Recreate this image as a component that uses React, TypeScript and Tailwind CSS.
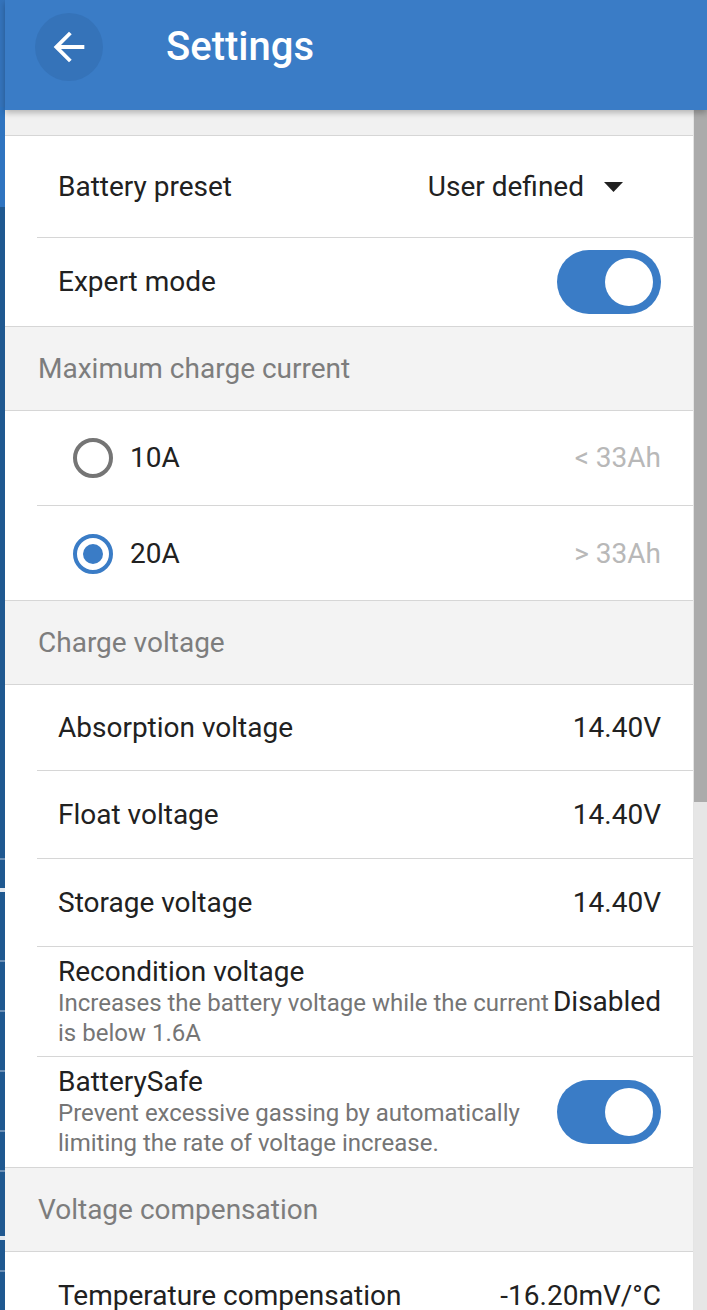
import { ReactNode } from "react";

const Toggle = () => (
  <div className="flex h-[64px] w-[104px] shrink-0 items-center justify-end rounded-full bg-[#3a7cc6] p-[8px]">
    <div className="h-[48px] w-[48px] rounded-full bg-white" />
  </div>
);

const Radio = ({ checked }: { checked: boolean }) => (
  <div
    className={`flex h-[40px] w-[40px] shrink-0 items-center justify-center rounded-full border-[4px] ${
      checked ? "border-[#3a7cc6]" : "border-[#757575]"
    }`}
  >
    {checked && <div className="h-[20px] w-[20px] rounded-full bg-[#3a7cc6]" />}
  </div>
);

const Section = ({ title }: { title: string }) => (
  <div className="flex h-[85px] items-center border-y border-[#d6d6d6] bg-[#f3f3f3] pl-[33px] text-[28px] text-[#7d7d7d]">
    {title}
  </div>
);

const Row = ({
  label,
  right,
  height = "h-[88px]",
  last = false,
}: {
  label: string;
  right?: ReactNode;
  height?: string;
  last?: boolean;
}) => (
  <div className="pl-[32px]">
    <div
      className={`flex ${height} items-center justify-between pl-[21px] pr-[32px] ${
        last ? "" : "border-b border-[#d6d6d6]"
      }`}
    >
      <span className="text-[28px] text-[#212121]">{label}</span>
      {right}
    </div>
  </div>
);

const Value = ({ children }: { children: ReactNode }) => (
  <span className="text-[28px] text-[#212121]">{children}</span>
);

const DescRow = ({
  label,
  desc,
  right,
  last = false,
}: {
  label: string;
  desc: string;
  right: ReactNode;
  last?: boolean;
}) => (
  <div className="pl-[32px]">
    <div
      className={`flex h-[110px] items-center pl-[21px] pr-[32px] ${
        last ? "" : "border-b border-[#d6d6d6]"
      }`}
    >
      <div className="flex w-[494px] shrink-0 flex-col">
        <span className="text-[28px] leading-[32px] text-[#212121]">{label}</span>
        <span className="text-[24px] leading-[30px] text-[#757575]">{desc}</span>
      </div>
      <div className="ml-auto">{right}</div>
    </div>
  </div>
);

const RadioRow = ({
  label,
  hint,
  checked,
  last = false,
}: {
  label: string;
  hint: string;
  checked: boolean;
  last?: boolean;
}) => (
  <div className="pl-[32px]">
    <div
      className={`flex h-[95px] items-center pl-[36px] pr-[32px] ${
        last ? "" : "border-b border-[#d6d6d6]"
      }`}
    >
      <Radio checked={checked} />
      <span className="ml-[17px] flex-1 text-[28px] text-[#212121]">{label}</span>
      <span className="text-[28px] text-[#b8b8b8]">{hint}</span>
    </div>
  </div>
);

const voltages = [
  { label: "Absorption voltage", value: "14.40V", height: "h-[86px]" },
  { label: "Float voltage", value: "14.40V", height: "h-[88px]" },
  { label: "Storage voltage", value: "14.40V", height: "h-[88px]" },
];

export default function App() {
  return (
    <div className="flex h-[1310px] w-[707px] overflow-hidden bg-white font-['Roboto',sans-serif]">
      {/* app peeking behind the panel */}
      <div className="flex w-[5px] shrink-0 flex-col">
        <div className="h-[107px] bg-[#3473bb]" />
        <div className="h-[100px] bg-[#2f74c0]" />
        <div className="flex flex-1 flex-col bg-[#1f5890]">
          <div className="mt-[651px] h-[2px] bg-[#6b8fb5]" />
          <div className="mt-[28px] h-[4px] bg-[#e2e8ef]" />
          <div className="mt-[68px] h-[2px] bg-[#6b8fb5]" />
          <div className="mt-[48px] h-[2px] bg-[#6b8fb5]" />
          <div className="mt-[58px] h-[2px] bg-[#6b8fb5]" />
          <div className="mt-[58px] h-[2px] bg-[#6b8fb5]" />
          <div className="mt-[38px] h-[2px] bg-[#6b8fb5]" />
          <div className="mt-[64px] h-[4px] bg-[#e2e8ef]" />
          <div className="mt-[30px] h-[2px] bg-[#6b8fb5]" />
        </div>
      </div>

      <div className="flex min-w-0 flex-1 flex-col">
        <header className="relative z-10 flex h-[110px] shrink-0 items-start bg-[#3a7cc6] pt-[13px] shadow-[0_3px_6px_rgba(0,0,0,0.25)]">
          <div className="ml-[30px] flex h-[68px] w-[68px] items-center justify-center rounded-full bg-[#3573b9]">
            <svg width="46" height="46" viewBox="0 0 24 24">
              <path
                d="M20 11H7.83l5.59-5.59L12 4l-8 8 8 8 1.41-1.41L7.83 13H20v-2z"
                fill="white"
              />
            </svg>
          </div>
          <h1 className="ml-[63px] flex h-[68px] items-center text-[40px] font-medium text-white">
            Settings
          </h1>
        </header>

        <div className="flex min-h-0 flex-1">
          <main className="min-w-0 flex-1 overflow-hidden bg-white">
            <div className="h-[26px] border-b border-[#d6d6d6] bg-[#f1f1f1]" />
            <Row
              label="Battery preset"
              height="h-[102px]"
              right={
                <span className="flex items-center text-[28px] text-[#212121]">
                  User defined
                  <svg className="ml-[20px] mr-[38px]" width="19" height="10" viewBox="0 0 19 10">
                    <path d="M0 0h19L9.5 10z" fill="#212121" />
                  </svg>
                </span>
              }
            />
            <Row label="Expert mode" height="h-[88px]" right={<Toggle />} last />
            <Section title="Maximum charge current" />
            <RadioRow label="10A" hint="< 33Ah" checked={false} />
            <RadioRow label="20A" hint="> 33Ah" checked last />
            <div className="-mt-px">
              <Section title="Charge voltage" />
            </div>
            {voltages.map((v) => (
              <Row
                key={v.label}
                label={v.label}
                height={v.height}
                right={<Value>{v.value}</Value>}
              />
            ))}
            <DescRow
              label="Recondition voltage"
              desc="Increases the battery voltage while the current is below 1.6A"
              right={<Value>Disabled</Value>}
            />
            <DescRow
              label="BatterySafe"
              desc="Prevent excessive gassing by automatically limiting the rate of voltage increase."
              right={<Toggle />}
              last
            />
            <Section title="Voltage compensation" />
            <Row
              label="Temperature compensation"
              right={<Value>-16.20mV/°C</Value>}
              last
            />
          </main>

          <div className="flex w-[14px] shrink-0 flex-col border-l border-[#e4e4e4] bg-[#e6e6e6]">
            <div className="h-[692px] bg-[#ababab]" />
          </div>
        </div>
      </div>
    </div>
  );
}
